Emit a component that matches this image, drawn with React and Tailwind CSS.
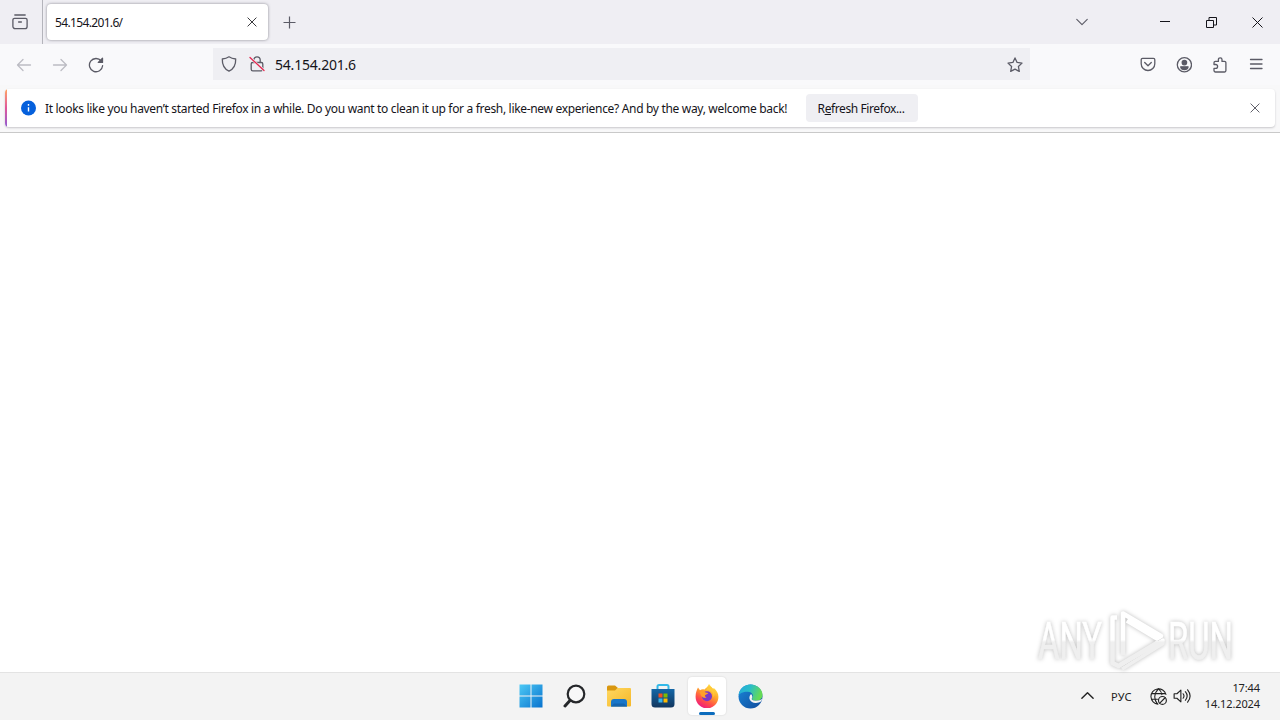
import React from "react";

const Icon = ({ size = 16, className = "", children }) => (
    <svg
        width={size}
        height={size}
        viewBox="0 0 16 16"
        fill="none"
        stroke="currentColor"
        strokeWidth="1.3"
        strokeLinecap="round"
        strokeLinejoin="round"
        className={`block shrink-0 ${className}`}
    >
        {children}
    </svg>
);

const TabBar = () => (
    <div className="flex h-[44px] bg-[#efeef3] text-[#5b5b66]">
        {/* Firefox View button */}
        <div className="flex w-[43px] items-center border-r border-[#b4b4bb] pl-[12px]">
            <Icon>
                <path d="M2.8 1h10.4M2.5 4.3h11a1.6 1.6 0 0 1 1.6 1.6v6.6a2.2 2.2 0 0 1-2.2 2.2H3.1a2.2 2.2 0 0 1-2.2-2.2V5.9a1.6 1.6 0 0 1 1.6-1.6ZM6.6 8h2.8" />
            </Icon>
        </div>
        <div className="ml-[4px] mt-[4px] flex h-[36px] w-[221px] items-center justify-between rounded-[4px] bg-white pl-[8px] pr-[10px] shadow-[0_0_3px_rgba(90,90,100,0.7)]">
            <span className="pt-[2px] text-[12px] tracking-[-0.65px] text-[#15141a]">54.154.201.6/</span>
            <Icon size={12} className="text-[#333338]">
                <path d="M2.5 2.5l11 11M13.5 2.5l-11 11" />
            </Icon>
        </div>
        <div className="flex flex-1 items-center pl-[14px]">
            <svg width="13" height="13" className="mt-[1px] ml-[1px]" stroke="currentColor" strokeWidth="1.2">
                <path d="M6.5.5v12M.5 6.5h12" />
            </svg>
        </div>
        <div className="flex items-center text-[#15141a]">
            <Icon size={14} className="mr-[71px] text-[#5b5b66]">
                <path d="M2 5l6 6 6-6" />
            </Icon>
            <svg width="10" height="10" className="mr-[36px]" stroke="currentColor">
                <path d="M0 4.5h10" />
            </svg>
            <svg width="11" height="11" className="mr-[35px]" fill="none" stroke="currentColor">
                <path d="M.5 3.5h7v7h-7ZM3 3V.5h7.5V8H8" />
            </svg>
            <svg width="11" height="11" className="mr-[17px]" fill="none" stroke="currentColor">
                <path d="M.5.5l10 10M10.5.5l-10 10" />
            </svg>
        </div>
    </div>
);

const Toolbar = () => (
    <div className="flex h-[41px] items-center bg-[#f9f9fb] pb-[1px] text-[#5b5b66]">
        <Icon className="ml-[16px] mt-[1px] text-[#bcbcc3]">
            <path d="M14.5 8H1.5M7 2.5L1.5 8 7 13.5" />
        </Icon>
        <Icon className="ml-[20px] mt-[1px] text-[#bcbcc3]">
            <path d="M1.5 8h13M9 2.5L14.5 8 9 13.5" />
        </Icon>
        <Icon className="ml-[20px] mt-[1px]">
            <path d="M13.2 4A6.6 6.6 0 1 0 14.6 8.7" />
            <path d="M14.5 1.2v4.2h-4.2Z" fill="currentColor" />
        </Icon>
        {/* Address field */}
        <div className="ml-[109px] flex h-[32px] w-[817px] items-center bg-[#efeff3] px-[8px]">
            <Icon>
                <path d="M8 .8c2 1.4 4.2 2 6.7 2.2.2 5.9-1.7 9.8-6.7 12.2C3 12.8 1.1 8.9 1.3 3 3.8 2.8 6 2.2 8 .8Z" />
            </Icon>
            <Icon className="ml-[12px]">
                <path d="M4.8 6.5V4a3.2 3.2 0 0 1 6.4 0v2.5M3.6 6.5h8.800a1.4 1.4 0 0 1 1.4 1.4v5.3a1.6 1.6 0 0 1-1.6 1.6H3.8a1.6 1.6 0 0 1-1.6-1.6V7.9a1.4 1.4 0 0 1 1.4-1.4Z" />
                <path d="M1 1.5l14 13" stroke="#efeff3" strokeWidth="2.5" />
                <path d="M1 1.5l14 13" stroke="#e22850" />
            </Icon>
            <span className="ml-[10px] flex-1 pt-[1px] text-[14px] tracking-[-0.2px] text-[#15141a]">54.154.201.6</span>
            <Icon className="-mr-[1px] mt-[1px]">
                <path d="M8 .9l2.1 4.5 4.9.7-3.6 3.4.9 4.9L8 12.2l-4.3 2.2.9-4.9L1 6.1l4.9-.7Z" />
            </Icon>
        </div>
        <div className="ml-auto mr-[16px] mt-[1px] flex gap-[20px]">
            <Icon>
                <path d="M2.5 1.4h11a1.3 1.3 0 0 1 1.3 1.3v4a6.8 6.8 0 0 1-13.6 0v-4a1.3 1.3 0 0 1 1.3-1.3ZM4.7 5.5L8 8.7 11.3 5.5" />
            </Icon>
            <Icon>
                <circle cx="8.4" cy="7.8" r="7.1" />
                <circle cx="8.4" cy="5.6" r="2.2" fill="currentColor" />
                <path d="M4.7 9.8h7.4c-.4 1.9-1.8 2.8-3.7 2.8S5.1 11.7 4.7 9.8Z" fill="currentColor" />
            </Icon>
            {/* Extensions */}
            <Icon>
                <path d="M2 7.5V5.800A1.4 1.4 0 0 1 3.4 4.4h3V2.600a1.8 1.8 0 0 1 3.6 0v1.800h2.500a1.4 1.4 0 0 1 1.4 1.4v7.8a1.4 1.4 0 0 1-1.4 1.4H3.400a1.4 1.4 0 0 1-1.400-1.400v-2.300h1.700a1.900 1.900 0 0 0 0-3.800Z" />
            </Icon>
            <Icon>
                <path d="M2.500 2.500h11.500M2.500 7h11.500M2.500 11.500h11.500" />
            </Icon>
        </div>
    </div>
);

const Notification = () => (
    <div className="h-[48px] border-b border-[#c9c9c9] bg-[#f8f8f9] px-[5px] pt-[4px]">
        <div className="flex h-[38px] items-center overflow-hidden rounded-[4px] bg-white shadow-[0_1px_2px_rgba(58,57,68,0.25)]">
            <div className="h-full w-[2px] bg-linear-to-b from-[#ffa45c] via-[#e0559a] to-[#9059d0]"></div>
            <svg width="16" height="16" className="ml-[14px] block">
                <circle cx="7.5" cy="8" r="7.5" fill="#0560dc" />
                <path d="M7.5 7.2v4.3M7.5 4v1.700" stroke="#fff" strokeWidth="1.4" />
            </svg>
            <span className="ml-[8px] w-[761px] whitespace-nowrap pt-[2px] text-[12px] tracking-[-0.32px] text-[#15141a]">
                It looks like you haven’t started Firefox in a while. Do you want to clean it up for a fresh, like-new experience? And by the way, welcome back!
            </span>
            <button className="h-[28px] w-[112px] rounded-[4px] bg-[#efeff3] pt-[2px] pr-[2px] text-[12px] tracking-[-0.4px] text-[#15141a]">
                R<u>e</u>fresh Firefox...
            </button>
            <Icon size={12} className="ml-auto mr-[14px] text-[#5b5b66]">
                <path d="M2.5 2.5l11 11M13.5 2.5l-11 11" />
            </Icon>
        </div>
    </div>
);

const Watermark = () => (
    <svg
        width="220"
        height="80"
        viewBox="1026 600 220 80"
        className="absolute left-[1026px] top-[600px] overflow-visible drop-shadow-[0_0_2px_rgba(0,0,0,0.26)]"
    >
        <defs>
            <linearGradient id="wm" x1="0" y1="610" x2="0" y2="672" gradientUnits="userSpaceOnUse">
                <stop offset="0.48" stopColor="#fff" />
                <stop offset="0.52" stopColor="#efefef" />
            </linearGradient>
        </defs>
        <g fill="url(#wm)" stroke="url(#wm)" strokeWidth="0.6" fontFamily="Roboto" fontSize="52">
            <text x="1038" y="659" textLength="64" lengthAdjust="spacingAndGlyphs">ANY</text>
            <text x="1168" y="659" textLength="65" lengthAdjust="spacingAndGlyphs">RUN</text>
        </g>
        <g fill="none" stroke="url(#wm)" strokeWidth="4.5" strokeLinejoin="round">
            <path d="M1117 617.5h-4.5V663l6 3 40-24" />
            <path d="M1123 655V613.5l38 22.5-4 2.5-30-18" />
            <path d="M1122 669l41-25.5v-3.5L1122 664" strokeWidth="3.5" />
        </g>
    </svg>
);

const Taskbar = () => (
    <div className="grid h-[48px] grid-cols-[1fr_265px_1fr] border-t border-[#e3e3e3] bg-[#f3f3f3]">
        <div></div>
        <div className="-mt-[1px] flex items-center justify-between pl-[11px] pr-[9px]">
            <svg width="24" height="24" viewBox="0 0 24 24">
                <defs>
                    <linearGradient id="win" x1="0" y1="0" x2="1" y2="1">
                        <stop stopColor="#4dc9f5" />
                        <stop offset="1" stopColor="#0872ce" />
                    </linearGradient>
                </defs>
                <path d="M.5.5h11v11H.5ZM12.5.5h11v11h-11ZM.5 12.5h11v11H.5ZM12.5 12.5h11v11h-11Z" fill="url(#win)" />
            </svg>
            <svg width="24" height="24" viewBox="0 0 24 24" fill="none" stroke="#25272a">
                <circle cx="14" cy="10" r="8.3" fill="#f8f8f8" strokeWidth="2.2" />
                <path d="M8 16.5L3 22" strokeWidth="3" strokeLinecap="round" />
            </svg>
            <svg width="26" height="24" viewBox="0 0 26 24">
                <defs>
                    <linearGradient id="folder" x1="0" y1="0" x2="1" y2="1">
                        <stop stopColor="#ffd861" />
                        <stop offset="1" stopColor="#f5b729" />
                    </linearGradient>
                </defs>
                <path d="M1 3a1.5 1.5 0 0 1 1.5-1.5H9L12 4v5H1Z" fill="#d9970f" />
                <path d="M1 6.5h8L11.5 4H24a1 1 0 0 1 1 1v16.5a1 1 0 0 1-1 1H2a1 1 0 0 1-1-1Z" fill="url(#folder)" />
                <path d="M5 22.500V18a3 3 0 0 1 3-3h10a3 3 0 0 1 3 3v4.5Z" fill="#1976c8" />
                <path d="M5 22.5l3-3h10l3 3Z" fill="#1564ad" />
            </svg>
            <svg width="24" height="24" viewBox="0 0 24 24">
                <defs>
                    <linearGradient id="store" x1="0" y1="0" x2="0" y2="1">
                        <stop stopColor="#1467a7" />
                        <stop offset="1" stopColor="#12365e" />
                    </linearGradient>
                </defs>
                <path d="M6.5 6V2.500A1.5 1.5 0 0 1 8 1h8a1.5 1.5 0 0 1 1.5 1.5V6" fill="none" stroke="#33b9e8" strokeWidth="2" />
                <path d="M.5 5h23v15a3.5 3.5 0 0 1-3.5 3.5H4A3.5 3.5 0 0 1 .5 20Z" fill="url(#store)" />
                <path d="M7.5 9.5h4v4h-4Z" fill="#f25022" />
                <path d="M12.5 9.5h4v4h-4Z" fill="#7fba00" />
                <path d="M7.5 14.5h4v4h-4Z" fill="#38b5ee" />
                <path d="M12.5 14.5h4v4h-4Z" fill="#ffb900" />
            </svg>
            {/* Running application */}
            <div className="relative -mx-[7px] flex h-[38px] w-[38px] items-center justify-center rounded-[4px] bg-white shadow-[0_0_2px_rgba(0,0,0,0.15)]">
                <svg width="24" height="24" viewBox="0 0 24 24">
                    <defs>
                        <linearGradient id="fox" x1="0.8" y1="0" x2="0.25" y2="1">
                            <stop stopColor="#fff04f" />
                            <stop offset="0.4" stopColor="#ffa52c" />
                            <stop offset="0.7" stopColor="#ff5048" />
                            <stop offset="1" stopColor="#ed1587" />
                        </linearGradient>
                    </defs>
                    <path d="M14 0c1 2 3 3 4 5l.8-1C22 7 23.5 9.5 23.4 13A11.4 11.4 0 0 1 .6 13C.5 9 1.8 5.8 3 3.5l2 2.7C6.5 5 8 5 9.5 5.5 11 3.5 12.8 3 14 0Z" fill="url(#fox)" />
                    <circle cx="12" cy="12.3" r="5" fill="#7a39c9" />
                    <path d="M4.5 8c2-1.5 4.5-1 6 .5l2.8.4c-.5 1.3-2.5 1.3-3.2 2.3-.6 1 .4 1.8 1.5 2.2-2.2 1.1-4.3 0-5.4-1.7Z" fill="#ffa02a" />
                    <path d="M11 6.5c5-1 8 2 7.5 7 2-3 1-8-2.5-10.5l-2-1Z" fill="#ffc93a" />
                </svg>
                <div className="absolute bottom-0 left-[11px] h-[3px] w-[16px] rounded-full bg-[#0c6cbd]"></div>
            </div>
            <svg width="25" height="25" viewBox="0 0 24 24">
                <defs>
                    <linearGradient id="edgeTop" x1="0" y1="0" x2="1" y2="0.3">
                        <stop stopColor="#23a9df" />
                        <stop offset="0.5" stopColor="#29bdc7" />
                        <stop offset="1" stopColor="#65da55" />
                    </linearGradient>
                    <linearGradient id="edgeBottom" x1="0" y1="0" x2="1" y2="1">
                        <stop stopColor="#1987da" />
                        <stop offset="1" stopColor="#104b9b" />
                    </linearGradient>
                </defs>
                <circle cx="12" cy="12" r="11.5" fill="url(#edgeBottom)" />
                <path d="M.5 11C1.5 4 6.5.5 12 .5c7 0 11.5 5 11.5 9.8 0 4-3 5.7-6 5.7-3 0-4.5-1.2-4-2.2 2-1.8.5-6.3-4-6.3C5 7.3 1.5 9 .5 11Z" fill="url(#edgeTop)" />
                <path d="M12.5 9.5c-3.5 3.5-.8 8.5 4.3 8.7 2.2.1 4-.7 5.4-1.6l1.5-2.6c-2 1.7-4 2-6.5 2-3 0-4.5-1.2-4-2.2 1-.9.8-2.500-.7-4.300Z" fill="#f3f3f3" />
            </svg>
        </div>
        {/* System tray */}
        <div className="-mt-[2px] flex items-center justify-end pr-[20px] text-[#222]">
            <Icon size={15} className="mr-[16px]">
                <path d="M2 11l6-6 6 6" strokeWidth="1.5" />
            </Icon>
            <span className="mr-[18px] mt-[3px] text-[11px] tracking-[0.3px]">РУС</span>
            <Icon size={17} className="mr-[6px] mt-[1px]">
                <path d="M15 6A7.2 7.2 0 1 0 7.5 15.2M8 .8C3.5 5 3.5 11 7 15M8 .8c2 1.6 3 3.5 3.2 5.5M1.5 5.3h13M1.5 10.5H7" strokeWidth="1" />
                <circle cx="11.7" cy="11.7" r="3.7" strokeWidth="1.1" />
                <path d="M9.2 14.2l5-5" strokeWidth="1.1" />
            </Icon>
            <Icon size={18} className="mr-[14px] mt-[1px]">
                <path d="M1 6h2.5L7 2.8v10.4L3.5 10H1ZM9 6c1 1.3 1 2.7 0 4M11 4.2c2 2.4 2 5.2 0 7.6M13 2.5c2.8 3.5 2.8 7.5 0 11" strokeWidth="1" />
            </Icon>
            <div className="text-right text-[11px] leading-[16px] tracking-[-0.1px]">
                <div>17:44</div>
                <div>14.12.2024</div>
            </div>
        </div>
    </div>
);

export default function App() {
    return (
        <div className="relative flex h-[720px] w-[1280px] flex-col overflow-hidden bg-white font-['Noto_Sans','Open_Sans',sans-serif]">
            <TabBar />
            <Toolbar />
            <Notification />
            <div className="flex-1 bg-white"></div>
            <Taskbar />
            <Watermark />
        </div>
    );
}
